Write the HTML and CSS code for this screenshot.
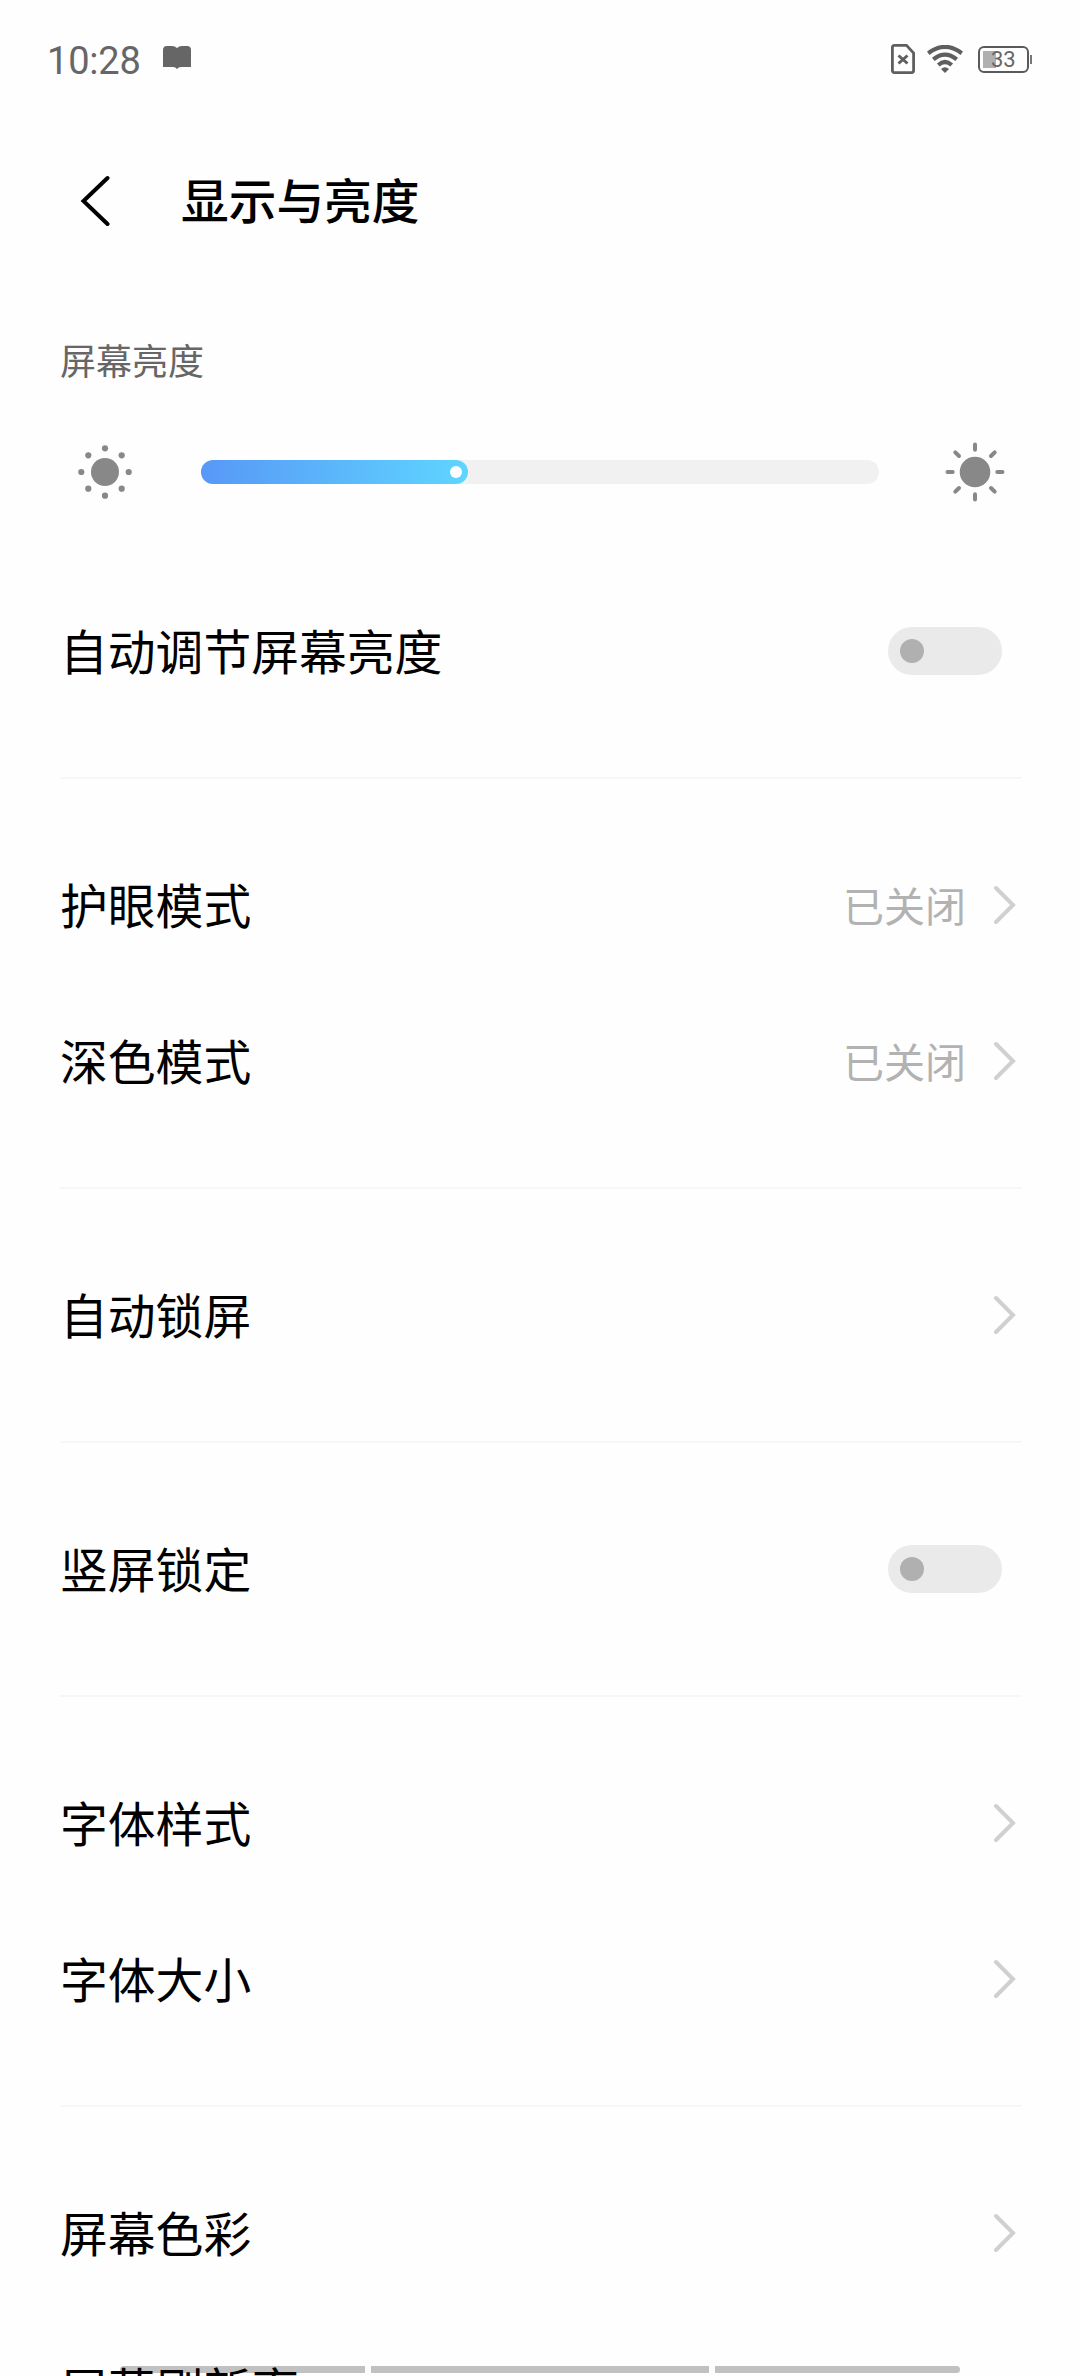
FILE: index.html
```html
<!DOCTYPE html>
<html lang="zh-CN">
<head>
  <meta charset="UTF-8">
  <title>显示与亮度</title>
  <link rel="stylesheet" href="styles.css">
</head>
<body>
  <div class="screen">
    <div class="status-bar">
      <span class="time">10:28</span>
      <svg class="book" width="28" height="24" viewBox="0 0 28 24">
        <path d="M0 4Q0 0 4 0H9Q12 0 14 2Q16 0 19 0H24Q28 0 28 4V21H18Q15.500 21 14 23Q12.500 21 10 21H0Z" fill="#666"/>
      </svg>
      <div class="status-icons">
        <svg width="24" height="30" viewBox="0 0 24 30" fill="none" stroke="#5f5f5f" stroke-width="2.800">
          <path d="M3.400 1.400H15.500L22.600 9V26.600Q22.600 28.600 20.600 28.600H3.400Q1.400 28.600 1.400 26.600V3.400Q1.400 1.400 3.400 1.400Z"/>
          <path d="M7.500 11.500L16.500 19.500M16.500 11.500L7.500 19.500" stroke-width="3"/>
        </svg>
        <svg class="wifi" width="36" height="28" viewBox="0 0 36 28" fill="none" stroke="#5f5f5f" stroke-width="4.200">
          <path d="M1.200 8.200Q18 -4.400 34.800 8.200"/>
          <path d="M6.300 14.400Q18 4.800 29.700 14.400"/>
          <path d="M11.300 20Q18 14 24.700 20"/>
          <path d="M14 24Q18 20.500 22 24L18 28Z" fill="#5f5f5f" stroke="none"/>
        </svg>
        <div class="battery"><span class="battery-level"></span><span class="battery-text">33</span></div>
        <span class="battery-cap"></span>
      </div>
    </div>

    <div class="title-bar">
      <svg width="30" height="52" viewBox="0 0 30 52" fill="none" stroke="#000" stroke-width="4" stroke-linecap="round">
        <path d="M27.500 3L3.500 26L27.500 49"/>
      </svg>
      <h1>显示与亮度</h1>
    </div>

    <div class="section-label">屏幕亮度</div>
    <div class="brightness">
      <svg width="60" height="60" viewBox="-30 -30 60 60" fill="#888">
        <circle r="14"/>
        <circle cy="-23.700" r="3.100"/>
        <circle cy="23.700" r="3.100"/>
        <circle cx="-23.700" r="3.100"/>
        <circle cx="23.700" r="3.100"/>
        <circle cx="-16.700" cy="-16.700" r="3.100"/>
        <circle cx="16.700" cy="-16.700" r="3.100"/>
        <circle cx="-16.700" cy="16.700" r="3.100"/>
        <circle cx="16.700" cy="16.700" r="3.100"/>
      </svg>
      <div class="slider"><div class="slider-fill"><span class="slider-dot"></span></div></div>
      <svg width="60" height="60" viewBox="-30 -30 60 60" fill="#888" stroke="#888" stroke-width="4" stroke-linecap="round">
        <circle r="15.300" stroke="none"/>
        <path d="M0 -22.300V-27.500M0 22.300V27.500M-22.300 0H-27.500M22.300 0H27.500M-16 -16L-19.700 -19.700M16 -16L19.700 -19.700M-16 16L-19.700 19.700M16 16L19.700 19.700"/>
      </svg>
    </div>

    <div class="group">
      <div class="row"><span class="name">自动调节屏幕亮度</span><div class="switch"></div></div>
    </div>
    <div class="group">
      <div class="row">
        <span class="name">护眼模式</span><span class="value">已关闭</span>
        <svg class="chevron" viewBox="0 0 22 40"><path d="M2 3L19 20L2 37"/></svg>
      </div>
      <div class="row">
        <span class="name">深色模式</span><span class="value">已关闭</span>
        <svg class="chevron" viewBox="0 0 22 40"><path d="M2 3L19 20L2 37"/></svg>
      </div>
    </div>
    <div class="group">
      <div class="row">
        <span class="name">自动锁屏</span>
        <svg class="chevron" viewBox="0 0 22 40"><path d="M2 3L19 20L2 37"/></svg>
      </div>
    </div>
    <div class="group">
      <div class="row"><span class="name">竖屏锁定</span><div class="switch"></div></div>
    </div>
    <div class="group">
      <div class="row">
        <span class="name">字体样式</span>
        <svg class="chevron" viewBox="0 0 22 40"><path d="M2 3L19 20L2 37"/></svg>
      </div>
      <div class="row">
        <span class="name">字体大小</span>
        <svg class="chevron" viewBox="0 0 22 40"><path d="M2 3L19 20L2 37"/></svg>
      </div>
    </div>
    <div class="group">
      <div class="row">
        <span class="name">屏幕色彩</span>
        <svg class="chevron" viewBox="0 0 22 40"><path d="M2 3L19 20L2 37"/></svg>
      </div>
      <div class="row"><span class="name">屏幕刷新率</span></div>
    </div>

    <!-- gesture bar, sits on top of the list -->
    <div class="gesture-bar"><span></span><span></span><span></span></div>
  </div>
</body>
</html>
```
FILE: styles.css
```css
* {
  box-sizing: border-box;
}

body {
  margin: 0;
  background: #fefefe;
  color: #000;
  font-family: "Noto Sans CJK SC", sans-serif;
}

.screen {
  position: relative;
  width: 1080px;
  height: 2376px;
  overflow: hidden;
}

.status-bar {
  display: flex;
  align-items: center;
  height: 118px;
  padding: 0 48px 0 47px;
}

.book {
  margin-bottom: 2px;
}

.time {
  width: 116px;
  padding-top: 3px;
  font: 38px/40px Roboto, sans-serif;
  letter-spacing: -0.2px;
  color: #666;
}

.status-icons {
  display: flex;
  align-items: center;
  margin-left: auto;
}

.wifi {
  margin: 0 15px 0 12px;
}

.battery {
  position: relative;
  width: 51px;
  height: 27px;
  border: 2.5px solid #5a5a5a;
  border-radius: 6px;
}

.battery-level {
  position: absolute;
  left: 3px;
  top: 3px;
  width: 13px;
  height: 17px;
  background: #b0b0b0;
}

.battery-text {
  position: absolute;
  left: 11px;
  top: 0;
  font: 22px/24px Roboto, sans-serif;
  color: #666;
}

.battery-cap {
  width: 2px;
  height: 9px;
  margin-left: 1px;
  background: #777;
}

.title-bar {
  display: flex;
  align-items: center;
  height: 166px;
  padding-left: 80px;
}

h1 {
  margin: 0 0 0 71px;
  padding-bottom: 4px;
  font-size: 47.7px;
  font-weight: 500;
  line-height: 70px;
}

.section-label {
  height: 154px;
  padding: 48px 0 0 60px;
  font-size: 36px;
  line-height: 54px;
  color: #666;
}

.brightness {
  display: flex;
  align-items: center;
  justify-content: space-between;
  height: 68px;
  padding: 0 75px;
}

.slider {
  width: 678px;
  height: 24px;
  border-radius: 12px;
  background: #f1f1f1;
}

.slider-fill {
  display: flex;
  align-items: center;
  justify-content: flex-end;
  width: 267px;
  height: 24px;
  padding-right: 6px;
  border-radius: 12px;
  background: linear-gradient(90deg, #5898f7, #5ed5ff);
}

.slider-dot {
  width: 12px;
  height: 12px;
  border-radius: 50%;
  background: #fff;
}

.group {
  margin: 0 58px 0 60px;
  padding: 48px 0;
  border-bottom: 2px solid #f7f7f7;
}

.brightness + .group {
  padding-top: 67px;
}

.row {
  display: flex;
  align-items: center;
  justify-content: space-between;
  height: 156px;
  padding-right: 6px;
  font-size: 47.8px;
  line-height: 70px;
}

.name,
.value {
  padding-bottom: 3px;
}

.value {
  margin-left: auto;
  margin-right: 28px;
  font-size: 41px;
  color: #b2b2b2;
}

.chevron {
  width: 22px;
  height: 40px;
  fill: none;
  stroke: #d0d0d0;
  stroke-width: 4;
  stroke-linecap: round;
}

.switch {
  width: 114px;
  height: 48px;
  margin-right: 14px;
  padding: 12px;
  border-radius: 24px;
  background: #eaeaea;
}

.switch::before {
  content: "";
  display: block;
  width: 24px;
  height: 24px;
  border-radius: 50%;
  background: #b0b0b0;
}

.gesture-bar {
  position: absolute;
  left: 120px;
  top: 2366px;
  display: grid;
  grid-template-columns: 245px 338px 245px;
  gap: 6px;
}

.gesture-bar span {
  height: 7px;
  background: rgba(0, 0, 0, 0.24);
}

.gesture-bar span:first-child {
  border-radius: 4px 0 0 4px;
}

.gesture-bar span:last-child {
  border-radius: 0 4px 4px 0;
}
```
